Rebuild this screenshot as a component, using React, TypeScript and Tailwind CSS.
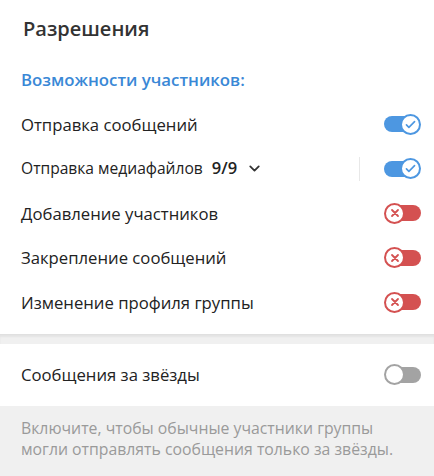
import { ChevronDown } from "lucide-react";

type ToggleState = "on" | "off" | "locked";

function Toggle({ state }: { state: ToggleState }) {
  if (state === "on") {
    return (
      <div className="relative h-[21px] w-[37px] flex items-center">
        <div className="h-[16px] w-[35px] rounded-full bg-[#4d97e1]" />
        <div className="absolute right-0 top-0 flex h-[21px] w-[21px] items-center justify-center rounded-full border-2 border-[#4d97e1] bg-white">
          <svg viewBox="0 0 16 16" className="h-[13px] w-[13px]">
            <path d="M3 8.5l3 3 7-7" fill="none" stroke="#4d97e1" strokeWidth="2" strokeLinecap="round" strokeLinejoin="round" />
          </svg>
        </div>
      </div>
    );
  }
  if (state === "locked") {
    return (
      <div className="relative h-[21px] w-[37px] flex items-center justify-end">
        <div className="h-[16px] w-[35px] rounded-full bg-[#d45151]" />
        <div className="absolute left-0 top-0 flex h-[21px] w-[21px] items-center justify-center rounded-full border-2 border-[#d45151] bg-white">
          <svg viewBox="0 0 16 16" className="h-[12px] w-[12px]">
            <path d="M4 4l8 8M12 4l-8 8" fill="none" stroke="#d45151" strokeWidth="2.4" strokeLinecap="round" />
          </svg>
        </div>
      </div>
    );
  }
  return (
    <div className="relative h-[21px] w-[37px] flex items-center justify-end">
      <div className="h-[16px] w-[35px] rounded-full bg-[#a3a3a3]" />
      <div className="absolute left-0 top-0 h-[21px] w-[21px] rounded-full border-2 border-[#a3a3a3] bg-white" />
    </div>
  );
}

function Row({ label, state, extra }: { label: string; state: ToggleState; extra?: boolean }) {
  return (
    <div className="flex h-[44.5px] items-center justify-between pl-[21px] pr-[13px]">
      <div className={`flex items-center text-[#222] ${extra ? "text-[15.6px]" : "text-[16.7px]"}`}>
        <span>{label}</span>
        {extra && (
          <>
            <span className="ml-[9px] text-[16.5px] font-semibold">9/9</span>
            <ChevronDown className="ml-[9px] h-[17px] w-[17px] text-[#333]" strokeWidth={2.5} />
          </>
        )}
      </div>
      <div className="flex items-center">
        {extra && <div className="mr-[24px] h-[24px] w-px bg-[#e8e8e8]" />}
        <Toggle state={state} />
      </div>
    </div>
  );
}

export default function App() {
  return (
    <div className="flex h-[476px] w-[434px] flex-col overflow-hidden bg-white font-['Open_Sans',sans-serif]">
      <div className="pl-[23px] pt-[15px] text-[20px] font-semibold leading-[28px] text-[#333]">Разрешения</div>
      <div className="pl-[21px] pt-[26px] pb-[11px] text-[16.8px] font-semibold leading-[22px] text-[#3a88d6]">
        Возможности участников:
      </div>
      <div>
        <Row label="Отправка сообщений" state="on" />
        <Row label="Отправка медиафайлов" state="on" extra />
        <Row label="Добавление участников" state="locked" />
        <Row label="Закрепление сообщений" state="locked" />
        <Row label="Изменение профиля группы" state="locked" />
      </div>
      <div className="mt-[9px] h-[10px] border-t border-[#e0e0e0] bg-[#f0f0f0] shadow-[inset_0_2px_2px_rgba(0,0,0,0.05)]" />
      <div className="flex h-[62px] items-center justify-between pl-[21px] pr-[13px]">
        <span className="text-[16.7px] text-[#222]">Сообщения за звёзды</span>
        <Toggle state="off" />
      </div>
      <div className="flex-1 bg-[#f0f0f0] px-[21px] pt-[12px] text-[15.8px] leading-[21px] text-[#9a9a9a]">
        Включите, чтобы обычные участники группы могли отправлять сообщения только за звёзды.
      </div>
    </div>
  );
}
